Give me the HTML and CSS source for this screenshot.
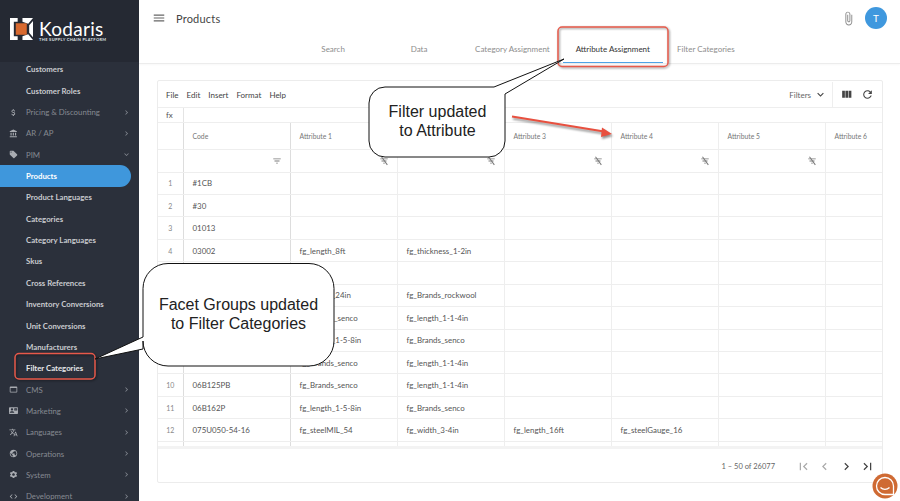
FILE: index.html
```html
<!DOCTYPE html>
<html lang="en">
<head>
<meta charset="utf-8">
<title>Products</title>
<link rel="stylesheet" href="styles.css">
</head>
<body>
<svg class="defs" aria-hidden="true">
  <symbol id="i-right" viewBox="0 0 24 24"><path d="M10 6L8.59 7.41 13.17 12l-4.58 4.59L10 18l6-6z"/></symbol>
  <symbol id="i-left" viewBox="0 0 24 24"><path d="M15.41 7.41L14 6l-6 6 6 6 1.41-1.41L10.83 12z"/></symbol>
  <symbol id="i-down" viewBox="0 0 24 24"><path d="M16.59 8.59L12 13.17 7.41 8.59 6 10l6 6 6-6z"/></symbol>
  <symbol id="i-filter" viewBox="0 0 24 24"><path d="M10 18h4v-2h-4v2zM3 6v2h18V6H3zm3 7h12v-2H6v2z"/></symbol>
  <symbol id="i-filter-off" viewBox="0 0 24 24"><path d="M10 18h4v-2h-4v2zM3 6v2h18V6H3zm3 7h12v-2H6v2z"/><path d="M5 2.500L7 1 21 20.500 19 22z"/></symbol>
</svg>
<div class="app">
  <aside class="sidebar">
    <div class="logo">
      <svg class="logo-mark" viewBox="0 0 24 24">
        <path class="logo-w" d="M0 0h8v4H4v15h4v4H0zM13 0h11l-5 6-6-2zM13 23h11l-5-6-6 2zM20 7.500l4-4.500v17l-4-4.500z"/>
        <rect class="logo-o" x="6" y="5.500" width="11.500" height="12"/>
      </svg>
      <div class="logo-text">
        <div class="logo-name">Kodaris</div>
        <div class="logo-tag">THE SUPPLY CHAIN PLATFORM</div>
      </div>
    </div>
    <nav class="nav">
      <a class="sub">Customers</a>
      <a class="sub">Customer Roles</a>
      <a class="top"><svg class="ni" viewBox="0 0 24 24"><path d="M11.800 10.900c-2.270-.59-3-1.200-3-2.150 0-1.090 1.010-1.850 2.700-1.850 1.780 0 2.440.85 2.500 2.100h2.210c-.07-1.720-1.120-3.300-3.210-3.810V3h-3v2.160c-1.940.42-3.500 1.680-3.500 3.610 0 2.310 1.910 3.460 4.700 4.130 2.500.6 3 1.480 3 2.410 0 .69-.49 1.790-2.700 1.790-2.060 0-2.870-.92-2.980-2.100h-2.200c.12 2.190 1.760 3.420 3.680 3.830V21h3v-2.150c1.950-.37 3.500-1.500 3.500-3.550 0-2.840-2.430-3.810-4.700-4.400z"/></svg><span>Pricing &amp; Discounting</span><svg class="chev"><use href="#i-right"/></svg></a>
      <a class="top"><svg class="ni" viewBox="0 0 24 24"><path d="M4 10v7h3v-7H4zm6 0v7h3v-7h-3zM2 22h19v-3H2v3zm14-12v7h3v-7h-3zm-4.500-9L2 6v2h19V6l-9.500-5z"/></svg><span>AR / AP</span><svg class="chev"><use href="#i-right"/></svg></a>
      <a class="top"><svg class="ni" viewBox="0 0 24 24"><path d="M21.410 11.580l-9-9C12.050 2.220 11.550 2 11 2H4c-1.100 0-2 .9-2 2v7c0 .55.22 1.050.59 1.420l9 9c.36.36.86.58 1.410.58.55 0 1.050-.22 1.410-.59l7-7c.37-.36.59-.86.59-1.410 0-.55-.23-1.060-.59-1.420zM5.500 7C4.670 7 4 6.330 4 5.500S4.670 4 5.500 4 7 4.670 7 5.500 6.330 7 5.500 7z"/></svg><span>PIM</span><svg class="chev"><use href="#i-down"/></svg></a>
      <a class="sub active">Products</a>
      <a class="sub">Product Languages</a>
      <a class="sub">Categories</a>
      <a class="sub">Category Languages</a>
      <a class="sub">Skus</a>
      <a class="sub">Cross References</a>
      <a class="sub">Inventory Conversions</a>
      <a class="sub">Unit Conversions</a>
      <a class="sub">Manufacturers</a>
      <a class="sub strong">Filter Categories</a>
      <a class="top"><svg class="ni" viewBox="0 0 24 24"><path d="M20 4H4c-1.100 0-2 .9-2 2v12c0 1.100.9 2 2 2h16c1.100 0 2-.9 2-2V6c0-1.100-.9-2-2-2zm0 14H4V8h16v10z"/></svg><span>CMS</span><svg class="chev"><use href="#i-right"/></svg></a>
      <a class="top"><svg class="ni" viewBox="0 0 24 24"><path d="M21 8V7l-3 2-3-2v1l3 2 3-2zm1-5H2C.9 3 0 3.900 0 5v14c0 1.100.9 2 2 2h20c1.100 0 1.990-.9 1.990-2L24 5c0-1.100-.9-2-2-2zM8 6c1.660 0 3 1.340 3 3s-1.340 3-3 3-3-1.340-3-3 1.340-3 3-3zm6 12H2v-1c0-2 4-3.100 6-3.100s6 1.100 6 3.100v1zm8-6h-8V6h8v6z"/></svg><span>Marketing</span><svg class="chev"><use href="#i-right"/></svg></a>
      <a class="top"><svg class="ni" viewBox="0 0 24 24"><path d="M12.870 15.070l-2.540-2.510.03-.03c1.740-1.940 2.980-4.170 3.710-6.530H17V4h-7V2H8v2H1v1.990h11.170C11.500 7.920 10.440 9.750 9 11.350 8.070 10.320 7.300 9.190 6.690 8h-2c.73 1.630 1.730 3.170 2.980 4.560l-5.090 5.020L4 19l5-5 3.110 3.110.76-2.040zM18.500 10h-2L12 22h2l1.120-3h4.750L21 22h2l-4.500-12zm-2.620 7l1.620-4.330L19.120 17h-3.240z"/></svg><span>Languages</span><svg class="chev"><use href="#i-right"/></svg></a>
      <a class="top"><svg class="ni" viewBox="0 0 24 24"><path d="M12 2C6.480 2 2 6.480 2 12s4.480 10 10 10 10-4.480 10-10S17.520 2 12 2zm-1 17.930c-3.950-.49-7-3.850-7-7.930 0-.62.08-1.210.21-1.790L9 15v1c0 1.100.9 2 2 2v1.930zm6.900-2.540c-.26-.81-1-1.390-1.900-1.390h-1v-3c0-.55-.45-1-1-1H8v-2h2c.55 0 1-.45 1-1V7h2c1.100 0 2-.9 2-2v-.41c2.930 1.190 5 4.060 5 7.410 0 2.080-.8 3.970-2.100 5.390z"/></svg><span>Operations</span><svg class="chev"><use href="#i-right"/></svg></a>
      <a class="top"><svg class="ni" viewBox="0 0 24 24"><path d="M19.140 12.940c.04-.3.06-.61.06-.94 0-.32-.02-.64-.07-.94l2.030-1.580c.18-.14.23-.41.12-.61l-1.920-3.320c-.12-.22-.37-.29-.59-.22l-2.390.96c-.5-.38-1.030-.7-1.620-.94l-.36-2.540c-.04-.24-.24-.41-.48-.41h-3.840c-.24 0-.43.17-.47.41l-.36 2.540c-.59.24-1.130.57-1.620.94l-2.390-.96c-.22-.08-.47 0-.59.22L2.740 8.870c-.12.21-.08.47.12.61l2.030 1.580c-.05.3-.09.63-.09.94s.02.64.07.94l-2.030 1.580c-.18.14-.23.41-.12.61l1.920 3.320c.12.22.37.29.59.22l2.390-.96c.5.38 1.030.7 1.620.94l.36 2.540c.05.24.24.41.48.41h3.840c.24 0 .44-.17.47-.41l.36-2.540c.59-.24 1.130-.56 1.620-.94l2.390.96c.22.08.47 0 .59-.22l1.920-3.320c.12-.22.07-.47-.12-.61l-2.010-1.580zM12 15.600c-1.980 0-3.600-1.620-3.600-3.600s1.620-3.600 3.600-3.600 3.600 1.620 3.600 3.600-1.620 3.600-3.600 3.600z"/></svg><span>System</span><svg class="chev"><use href="#i-right"/></svg></a>
      <a class="top"><svg class="ni" viewBox="0 0 24 24"><path d="M9.400 16.600L4.800 12l4.600-4.600L8 6l-6 6 6 6 1.400-1.400zm5.200 0l4.600-4.600-4.600-4.600L16 6l6 6-6 6-1.400-1.400z"/></svg><span>Development</span><svg class="chev"><use href="#i-right"/></svg></a>
    </nav>
  </aside>

  <main class="main">
    <header class="topbar">
      <svg class="menu-icon" viewBox="0 0 24 24"><path d="M3 18h18v-2H3v2zm0-5h18v-2H3v2zm0-7v2h18V6H3z"/></svg>
      <h1 class="title">Products</h1>
      <svg class="clip" viewBox="0 0 24 24"><path d="M16.500 6v11.500c0 2.210-1.790 4-4 4s-4-1.790-4-4V5c0-1.380 1.120-2.500 2.500-2.500s2.500 1.120 2.500 2.500v10.500c0 .55-.45 1-1 1s-1-.45-1-1V6H10v9.500c0 1.380 1.120 2.500 2.500 2.500s2.500-1.120 2.500-2.500V5c0-2.210-1.790-4-4-4S7 2.790 7 5v12.500c0 3.040 2.460 5.500 5.500 5.500s5.500-2.460 5.500-5.500V6h-1.500z"/></svg>
      <div class="avatar">T</div>
    </header>
    <div class="tabs">
      <a class="tab">Search</a>
      <a class="tab">Data</a>
      <a class="tab">Category Assignment</a>
      <a class="tab current">Attribute Assignment</a>
      <a class="tab">Filter Categories</a>
    </div>
    <div class="content">
      <section class="card">
        <div class="toolbar">
          <div class="menus"><span>File</span><span>Edit</span><span>Insert</span><span>Format</span><span>Help</span></div>
          <div class="filters">Filters<svg class="ti"><use href="#i-down"/></svg></div>
          <div class="tools">
            <svg class="ti" viewBox="0 0 24 24"><path d="M10 18h5V5h-5v13zm-6 0h5V5H4v13zM16 5v13h5V5h-5z"/></svg>
            <svg class="ti" viewBox="0 0 24 24"><path d="M17.650 6.350C16.200 4.900 14.210 4 12 4c-4.420 0-7.990 3.580-7.990 8s3.570 8 7.990 8c3.730 0 6.840-2.550 7.730-6h-2.080c-.82 2.330-3.040 4-5.650 4-3.310 0-6-2.690-6-6s2.690-6 6-6c1.660 0 3.140.69 4.220 1.780L13 11h7V4l-2.350 2.350z"/></svg>
          </div>
        </div>
        <div class="fx"><span class="fx-label">fx</span></div>
        <div class="grid-wrap">
          <table class="grid">
            <colgroup><col class="c-num"><col class="c-a"><col class="c-a"><col class="c-a"><col class="c-a"><col class="c-a"><col class="c-a"><col class="c-a"></colgroup>
            <thead>
              <tr class="head"><th></th><th>Code</th><th>Attribute 1</th><th>Attribute 2</th><th>Attribute 3</th><th>Attribute 4</th><th>Attribute 5</th><th>Attribute 6</th></tr>
              <tr class="filter-row">
                <td></td>
                <td><svg class="fi"><use href="#i-filter"/></svg></td>
                <td><svg class="fi"><use href="#i-filter-off"/></svg></td>
                <td><svg class="fi"><use href="#i-filter-off"/></svg></td>
                <td><svg class="fi"><use href="#i-filter-off"/></svg></td>
                <td><svg class="fi"><use href="#i-filter-off"/></svg></td>
                <td><svg class="fi"><use href="#i-filter-off"/></svg></td>
                <td></td>
              </tr>
            </thead>
            <tbody>
              <tr><td>1</td><td>#1CB</td><td></td><td></td><td></td><td></td><td></td><td></td></tr>
              <tr><td>2</td><td>#30</td><td></td><td></td><td></td><td></td><td></td><td></td></tr>
              <tr><td>3</td><td>01013</td><td></td><td></td><td></td><td></td><td></td><td></td></tr>
              <tr><td>4</td><td>03002</td><td>fg_length_8ft</td><td>fg_thickness_1-2in</td><td></td><td></td><td></td><td></td></tr>
              <tr><td>5</td><td></td><td></td><td></td><td></td><td></td><td></td><td></td></tr>
              <tr><td>6</td><td></td><td>fg_length_24in</td><td>fg_Brands_rockwool</td><td></td><td></td><td></td><td></td></tr>
              <tr><td>7</td><td></td><td>fg_Brands_senco</td><td>fg_length_1-1-4in</td><td></td><td></td><td></td><td></td></tr>
              <tr><td>8</td><td></td><td>fg_length_1-5-8in</td><td>fg_Brands_senco</td><td></td><td></td><td></td><td></td></tr>
              <tr><td>9</td><td></td><td>fg_Brands_senco</td><td>fg_length_1-1-4in</td><td></td><td></td><td></td><td></td></tr>
              <tr><td>10</td><td>06B125PB</td><td>fg_Brands_senco</td><td>fg_length_1-1-4in</td><td></td><td></td><td></td><td></td></tr>
              <tr><td>11</td><td>06B162P</td><td>fg_length_1-5-8in</td><td>fg_Brands_senco</td><td></td><td></td><td></td><td></td></tr>
              <tr><td>12</td><td>075U050-54-16</td><td>fg_steelMIL_54</td><td>fg_width_3-4in</td><td>fg_length_16ft</td><td>fg_steelGauge_16</td><td></td><td></td></tr>
              <tr><td></td><td>075U050-54-20</td><td>fg_steelMIL_54</td><td>fg_width_3-4in</td><td>fg_length_20ft</td><td></td><td></td><td></td></tr>
            </tbody>
          </table>
        </div>
        <div class="pager">
          <span class="range">1 – 50 of 26077</span>
          <svg class="pi dim" viewBox="0 0 24 24"><path d="M18.410 16.590L13.820 12l4.590-4.590L17 6l-6 6 6 6zM6 6h2v12H6z"/></svg>
          <svg class="pi dim"><use href="#i-left"/></svg>
          <svg class="pi"><use href="#i-right"/></svg>
          <svg class="pi" viewBox="0 0 24 24"><path d="M5.590 7.410L10.180 12l-4.590 4.590L7 18l6-6-6-6zM16 6h2v12h-2z"/></svg>
        </div>
      </section>
    </div>
  </main>
</div>

<svg class="marks" viewBox="0 0 900 501">
  <rect class="box" x="558" y="27" width="110" height="39.500" rx="4"/>
  <rect class="box" x="15" y="353.500" width="80" height="25.500" rx="4"/>
  <path class="bubble" d="M385 87H494L564 59L505 94V141a16 16 0 0 1-16 16H385a16 16 0 0 1-16-16V103a16 16 0 0 1 16-16z"/>
  <path class="bubble" d="M168 263.500H309a25 25 0 0 1 25 25V341a25 25 0 0 1-25 25H168a25 25 0 0 1-25-25V349L95 359L143 337V288.500a25 25 0 0 1 25-25z"/>
  <g class="red-arrow">
    <path d="M512 116.500L604 131.500" class="shaft"/>
    <path d="M612 134L602 127.500L601 137z" class="head"/>
  </g>
  <g>
    <circle class="chat-o" cx="885" cy="486" r="12.500"/>
    <path class="chat-w" d="M885 477.500a8.500 8.500 0 0 1 8.500 8.500v8.500H885a8.500 8.500 0 0 1 0-17z"/>
    <path class="chat-s" d="M880.500 487.500c2.500 2.500 6.500 2.500 9 0"/>
  </g>
</svg>
<div class="note note-a">Filter updated<br>to Attribute</div>
<div class="note note-b">Facet Groups updated<br>to Filter Categories</div>
</body>
</html>
```

FILE: styles.css
```css
* { box-sizing: border-box; }
html, body { margin: 0; height: 100%; }
body {
  width: 900px;
  height: 501px;
  overflow: hidden;
  position: relative;
  font-family: "Lato", "Noto Sans", sans-serif;
  color: #555;
  background: #fff;
}
.defs { display: none; }
.app { display: flex; height: 501px; }

/* Sidebar */
.sidebar { width: 139px; flex: none; background: #2b303b; overflow: hidden; display: flex; flex-direction: column; }
.logo { position: relative; z-index: 1; height: 62px; flex: none; background: #252933; display: flex; align-items: flex-start; gap: 6px; padding: 18px 0 0 10px; }
.logo-mark { width: 23px; height: 23px; }
.logo-w { fill: #fff; }
.logo-o { fill: #d8692f; }
.logo-text { color: #fff; padding-top: 3px; }
.logo-name { font-size: 19px; line-height: 16px; letter-spacing: .3px; font-weight: 400; }
.logo-tag { font-size: 4px; line-height: 5px; font-weight: 700; letter-spacing: .34px; color: #dfe0e2; white-space: nowrap; }
.nav { margin-top: -3.300px; display: flex; flex-direction: column; }
.nav a { height: 21.350px; flex: none; display: flex; align-items: center; font-size: 7.800px; white-space: nowrap; }
.sub { padding-left: 26px; color: #c9cbcf; font-weight: 700; }
.top { color: #868a92; font-weight: 400; padding-left: 9px; }
.top span { flex: 1; margin-left: 8px; }
.ni { width: 9px; height: 9px; fill: #a9acb2; flex: none; }
.chev { width: 9px; height: 9px; fill: #858992; margin-right: 8px; flex: none; }
.nav .active { background: #3f97dc; color: #fff; width: 131px; border-radius: 0 11px 11px 0; }
.nav .strong { color: #e6e7e9; }

/* Header */
.main { flex: 1; min-width: 0; display: flex; flex-direction: column; }
.topbar { height: 36px; flex: none; display: flex; align-items: center; padding: 0 13px 0 13px; }
.menu-icon { width: 14px; height: 14px; fill: #666; margin-right: 10px; }
.title { margin: 0; flex: 1; font-size: 11px; font-weight: 400; color: #444; letter-spacing: .2px; }
.clip { width: 15px; height: 15px; fill: #8b8b8b; margin-right: 9px; }
.avatar { width: 22px; height: 22px; border-radius: 50%; background: #3f98de; color: #fff; display: flex; align-items: center; justify-content: center; font-size: 10px; font-weight: 400; }
.tabs { height: 28px; flex: none; display: flex; justify-content: center; border-bottom: 1px solid #ececec; box-shadow: 0 1px 2px rgba(0,0,0,.03); }
.tab { min-width: 86px; padding: 0 13px 1px; display: flex; align-items: center; justify-content: center; font-size: 8px; color: #8d8d8d; white-space: nowrap; }
.tab.current { color: #333; border-bottom: 1px solid #4da3e6; }

/* Card */
.content { flex: 1; min-height: 0; padding: 16px 17px 18px 18px; }
.card { height: 403px; border: 1px solid #ececec; border-radius: 2px; display: flex; flex-direction: column; }
.toolbar { height: 27px; flex: none; display: flex; align-items: center; padding-top: 1px; border-bottom: 1px solid #eee; font-size: 8px; color: #444; }
.menus { flex: 1; display: flex; gap: 8px; padding-left: 8px; }
.filters { display: flex; align-items: center; gap: 3px; color: #666; height: 100%; padding-right: 5px; border-right: 1px solid #eee; }
.ti { width: 13px; height: 13px; fill: #444; }
.tools { display: flex; align-items: center; gap: 8px; padding: 0 8px 0 7px; }
.fx { height: 15px; flex: none; border-bottom: 1px solid #eee; font-size: 8px; color: #555; }
.fx-label { display: block; width: 26px; height: 14px; line-height: 14px; padding-left: 8px; border-right: 1px solid #e4e4e4; }
.grid-wrap { flex: 1; min-height: 0; overflow: hidden; border-bottom: 3px solid #f3f3f3; }
.grid { border-collapse: collapse; table-layout: fixed; width: 774px; font-size: 7.900px; color: #555; }
.c-num { width: 25px; }
.c-a { width: 107px; }
.grid th, .grid td { border-right: 1px solid #eee; border-bottom: 1px solid #eee; padding: 0 0 0 9px; white-space: nowrap; overflow: hidden; }
.grid th:first-child, .grid td:first-child { padding: 0; text-align: center; border-right-color: #ddd; color: #888; font-size: 7px; }
.grid th:nth-child(2), .grid td:nth-child(2) { border-right-color: #ddd; }
.grid th { font-weight: 400; font-size: 6.800px; color: #777; text-align: left; }
.head { height: 26px; }
.filter-row { height: 23px; }
.grid .filter-row td { text-align: right; padding: 0 8px 0 0; }
.grid tbody tr { height: 22.450px; }
.fi { width: 10px; height: 10px; fill: #7a7a7a; vertical-align: middle; }
.pager { height: 33px; flex: none; display: flex; align-items: center; justify-content: flex-end; padding: 1px 7px 0 0; font-size: 7.500px; color: #666; }
.range { margin-right: 14px; }
.pi { width: 15px; height: 15px; fill: #444; margin-left: 6.500px; }
.pi.dim { fill: #aaa; }

/* Annotations over the page */
.marks { position: absolute; left: 0; top: 0; width: 900px; height: 501px; pointer-events: none; }
.box { fill: none; stroke: #e8594a; stroke-width: 1.500; filter: drop-shadow(1px 1px 1px rgba(0,0,0,.45)); }
.bubble { fill: #fff; stroke: #111; stroke-width: 1; }
.red-arrow { filter: drop-shadow(1px 2px 1px rgba(0,0,0,.45)); }
.shaft { stroke: #e8503f; stroke-width: 2; fill: none; }
.head { fill: #e8503f; }
.chat-o { fill: #cf6a33; }
.chat-w { fill: none; stroke: #fff; stroke-width: 1.300; }
.chat-s { fill: none; stroke: #fff; stroke-width: 1.300; }
.note { position: absolute; font-family: "Liberation Sans", Arial, sans-serif; font-size: 16px; line-height: 19px; text-align: center; color: #222; white-space: nowrap; }
.note-a { left: 369px; top: 101.500px; width: 137px; }
.note-b { left: 143px; top: 294.500px; width: 191px; }
```
